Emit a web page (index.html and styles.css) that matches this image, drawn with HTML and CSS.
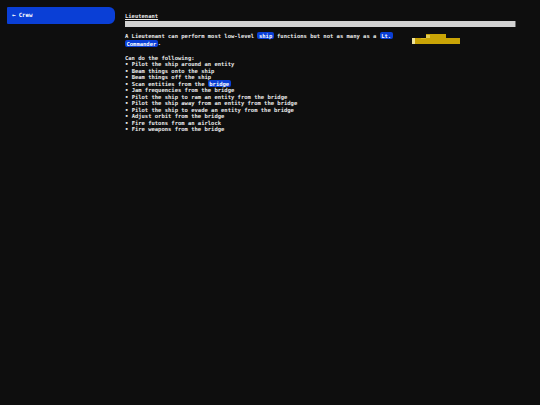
FILE: index.html
```html
<!DOCTYPE html>
<html>
<head>
<meta charset="utf-8">
<link rel="stylesheet" href="styles.css">
</head>
<body>
<div class="page">
  <aside class="sidebar">
    <a class="back-btn"><span class="arrow">&#8592;</span><span>Crew</span></a>
  </aside>
  <main class="content">
    <h1 class="title">Lieutenant</h1>
    <div class="bar"></div>
    <div class="intro">
      <p class="intro-text">A Lieutenant can perform most low-level <span class="chip">ship</span> functions but not as many as a <span class="chip">Lt. Commander</span>.</p>
      <svg class="rank" width="48" height="11" viewBox="0 0 48 11" shape-rendering="crispEdges">
        <rect x="0" y="4" width="48" height="6" fill="#c9a406"/>
        <rect x="14" y="0" width="20" height="4" fill="#c9a406"/>
        <rect x="0" y="4" width="3" height="6" fill="#efe39a"/>
        <rect x="14" y="1" width="4" height="3" fill="#e3cc55"/>
        <rect x="9" y="4" width="5" height="1" fill="#d9b820"/>
      </svg>
    </div>
    <div class="abilities">
      <div>Can do the following:</div>
      <ul class="list">
        <li>Pilot the ship around an entity</li>
        <li>Beam things onto the ship</li>
        <li>Beam things off the ship</li>
        <li>Scan entities from the <span class="chip">bridge</span></li>
        <li>Jam frequencies from the bridge</li>
        <li>Pilot the ship to ram an entity from the bridge</li>
        <li>Pilot the ship away from an entity from the bridge</li>
        <li>Pilot the ship to evade an entity from the bridge</li>
        <li>Adjust orbit from the bridge</li>
        <li>Fire futons from an airlock</li>
        <li>Fire weapons from the bridge</li>
      </ul>
    </div>
  </main>
</div>
</body>
</html>
```
FILE: styles.css
```css
html, body {
  margin: 0;
  padding: 0;
  background: #0e0e0e;
  width: 540px;
  height: 405px;
  overflow: hidden;
}
body {
  font-family: "DejaVu Sans Mono", "Liberation Mono", monospace;
  font-weight: bold;
  font-size: 5.5px;
  line-height: 6.5px;
  color: #ececec;
}
.page {
  display: flex;
  gap: 10px;
  padding: 7px 24px 0 7px;
}
.sidebar {
  width: 108px;
  flex: none;
}
.back-btn {
  display: flex;
  align-items: center;
  gap: 3px;
  height: 17px;
  padding-left: 5px;
  background: #0a3fd6;
  border-radius: 1px 6px 6px 1px;
  color: #ffffff;
  font-size: 5.8px;
}
.arrow {
  font-size: 6px;
}
.content {
  flex: 1;
  padding-top: 6px;
}
.title {
  margin: 0;
  font-size: 5.5px;
  line-height: 6.5px;
  font-weight: bold;
  text-decoration: underline;
}
.bar {
  height: 6px;
  margin-top: 1px;
  background: #d2d2d2;
  border-right: 1px solid #6a6a6a;
}
.intro {
  display: flex;
  align-items: flex-start;
  margin-top: 6px;
}
.intro-text {
  margin: 0;
  width: 280px;
  line-height: 7.5px;
}
.rank {
  margin-left: 7px;
  margin-top: 1px;
  flex: none;
}
.chip {
  background: #0a3fd6;
  color: #ffffff;
  padding: 0.5px 1.5px;
  border-radius: 2px;
  -webkit-box-decoration-break: clone;
  box-decoration-break: clone;
}
.abilities {
  margin-top: 7px;
}
.list {
  list-style: none;
  margin: 0;
  padding: 0;
}
.list li::before {
  content: "• ";
}
```
